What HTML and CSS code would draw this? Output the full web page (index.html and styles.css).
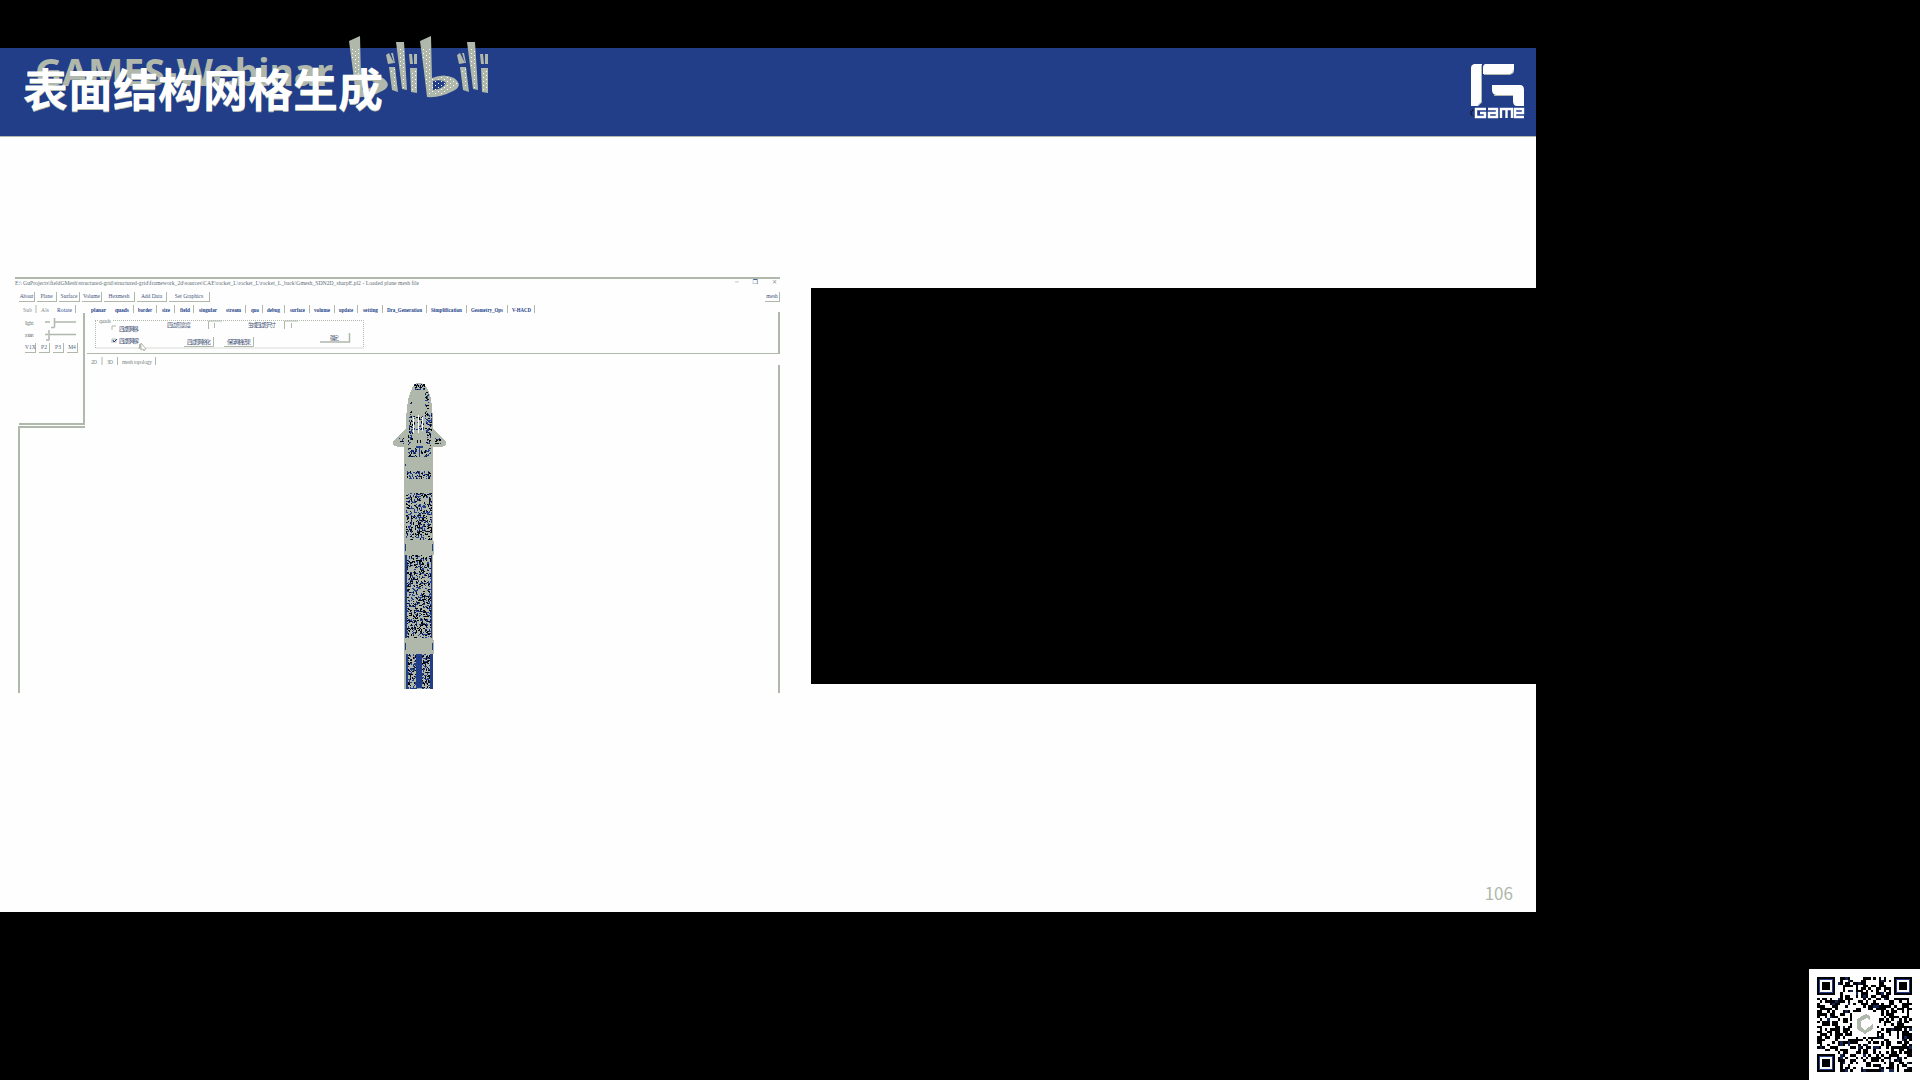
FILE: index.html
```
<!DOCTYPE html>
<html lang="zh-CN">
<head>
<meta charset="utf-8">
<title>表面结构网格生成</title>
<link rel="stylesheet" href="styles.css">
</head>
<body>
<main class="slide">
  <header class="banner">
    <h1 class="title">表面结构网格生成</h1>
    <svg class="logo" width="56" height="56" viewBox="0 0 56 56">
      <g fill="#fefefe">
        <path d="M4 0H12V38L8 42H1V4Q1 1 4 0Z"/>
        <path d="M15 0H44V6Q44 10 40 10H13V3Q13 1 15 0Z"/>
        <path d="M22 21H43V31H27Q22 31 22 26Z"/>
        <path d="M43 21H50Q54 21 54 26V42H47Q43 42 43 37Z"/>
      </g>
      <path d="M11.500 1V38L8 41.500M14 10.500H40Q43.500 10 43.500 6M24 31.500H43" fill="none" stroke="#b0b8ac" stroke-width="1"/>
      <g fill="none" stroke="#fefefe" stroke-width="2.4">
        <path d="M16 45H6V53H15V49H10M18 45H27V53H19V49H27M31 54V45H42V54M36.500 45V54M54 53H45V45H53V49H46"/>
      </g>
      <path d="M3 46L0 49L3 52" fill="none" stroke="#000" stroke-width="1.500" stroke-dasharray="1 1"/>
    </svg>
  </header>
  <section class="stage">
    <div class="app">
      <div class="titlebar">
        <svg class="caption" width="404" height="12"><text x="0" y="6" textLength="404" lengthAdjust="spacingAndGlyphs">E:\ GuProjects\fieldGMesh\structured-grid\structured-grid\framework_2d\sources\CAE\rocket_L\rocket_L\rocket_L_back\Gmesh_SDN2D_sharpE.pl2 - Loaded plane mesh file</text></svg>
        <div class="winctl"><span>─</span><span class="blue">❐</span><span>✕</span></div>
      </div>
      <div class="toolbar" id="toolbar"></div>
      <div class="middle">
        <aside class="side">
          <div class="tabs sidetabs"><svg width="62" height="12"><text x="0" y="6.500" textLength="9">Sub</text><path d="M13 0V8"/><text x="18" y="6.500" textLength="8">Als</text><text class="dark" x="34" y="6.500" textLength="15">Rotate</text><path d="M52.500 0V8"/></svg></div>
          <svg width="62" height="26" class="sliders"><text x="2" y="8" textLength="9">light:</text><path d="M22 5H27M31 5H53M31.500 1V10.500M28 10.500H31.500" stroke-width="1.500"/><text x="2" y="20" textLength="9">rotate:</text><path d="M22 17.500H25M26 17.500H53M26 13V23M23 23H26.500" stroke-width="1.500"/></svg>
          <div class="presets"><span>V1X</span><span>P2</span><span>P3</span><span>M4</span></div>
        </aside>
        <section class="work">
          <svg class="tabsvg" id="tabs" width="470" height="12"></svg>
          <svg class="form" width="270" height="32">
            <path d="M0 3.500H3M18 3.500H268.500V31H0.500V3.500" stroke-dasharray="1 1"/>
            <text x="4" y="5.500" textLength="12">quads</text>
            <path d="M17 13V9H21M17 26V22H21V25H18"/><path d="M18 23L19 25L22 22" class="mark"/>
            <text class="cjk" x="24" y="14" textLength="20">四边形网格1</text><text class="cjk" x="24" y="26" textLength="20">四边形网格2</text>
            <text class="cjk" x="72" y="10" textLength="24">四边形宽度</text><path d="M113.500 12V4H127M119.500 6V11"/>
            <text class="cjk" x="153" y="10" textLength="28">生成四边形尺寸</text><path d="M189.500 12V4H203M196.500 6V11"/>
            <text class="cjk" x="92" y="27" textLength="24">四边形网格化</text><path d="M89 29.500H118.500V20"/>
            <text class="cjk" x="132" y="27" textLength="24">保存网格结果</text><path d="M129 29.500H158.500V20"/>
            <text class="cjk" x="235" y="23" textLength="9">确定</text><path d="M225 25H254.500V16" stroke-width="1.500"/>
            <path class="pointer" d="M45 27V32L44 32L45 27L49 31H46Z"/>
          </svg>
        </section>
      </div>
      <div class="lower"></div>
      <svg class="views" width="70" height="12"><text x="0" y="6.500" textLength="6">2D</text><path d="M11 0V8M26.500 0V8M64.500 0V8"/><text x="16" y="6.500" textLength="6">3D</text><text x="31" y="6.500" textLength="30">mesh topology</text></svg>
      <div class="canvas"><svg id="rocket" width="54" height="306" shape-rendering="crispEdges"></svg></div>
      <svg class="cursor" width="7" height="9"><path d="M1 0V7L3 6L4 8L5 6H6Z"/></svg>
    </div>
    <div class="video"></div>
  </section>
  <footer class="pageno">106</footer>
</main>
<div class="watermark">
  <svg width="500" height="70">
    <defs><pattern id="dots" width="6" height="4" patternUnits="userSpaceOnUse"><path d="M1 0H2V1H1ZM4 2H5V3H4Z" fill="#fefefe"/></pattern></defs>
    <text class="mark-title" x="35" y="51" textLength="298" lengthAdjust="spacingAndGlyphs">GAMES-Webinar</text>
    <g id="bili">
      <path fill-rule="evenodd" d="M349 6L360 1L361 43Q373 38 383 43Q394 51 380 57Q369 63 356 62Q353 35 349 6ZM362 46V55Q372 54 375 48Q371 44 362 46Z"/>
      <path d="M386 20L389 18L394 28L388 29ZM391 18L394 28H395L393 18ZM389 32H395L398 57L392 55ZM396 7H404L407 55L402 54ZM409 19H412L413 29H410ZM414 19H417V29H414ZM410 33H417V58L411 57Z"/>
    </g>
    <use href="#bili" x="71"/>
    <g fill="url(#dots)" shape-rendering="crispEdges">
      <path d="M351 14H360V40H355ZM391 34H395L397 54H393ZM398 14H404L406 53H403ZM411 35H416V56H412Z"/>
      <path transform="translate(71)" d="M351 14H360L361 44Q373 39 382 44Q391 51 379 56Q369 61 357 60ZM391 34H395L397 54H393ZM398 14H404L406 53H403ZM411 35H416V56H412Z"/>
    </g>
  </svg>
</div>
<div class="qr"><svg id="qr" width="97" height="97" shape-rendering="crispEdges"></svg></div>
<script src="main.js"></script>
</body>
</html>
```
FILE: styles.css
```
* { box-sizing: border-box; }
:root { --blue: #223e88; --gray: #b0b8ac; --white: #fefefe; }
body { margin: 0; width: 1920px; height: 1080px; overflow: hidden; background: #000; padding-top: 48px; font-family: "Noto Sans", "Noto Sans CJK SC", sans-serif; position: relative; }
svg { display: block; flex: none; }
.slide { width: 1536px; height: 864px; background: var(--white); display: flex; flex-direction: column; }
.banner { height: 89px; flex: none; background: var(--blue); border-bottom: 1px solid var(--gray); display: flex; justify-content: space-between; padding: 14px 10px 0 23px; }
.logo { margin-top: 2px; }
.title { margin: 0; font: 700 45px/52px "Noto Sans CJK SC", sans-serif; color: var(--white); white-space: nowrap; position: relative; z-index: 2; text-shadow: 0 1px var(--gray); }
.stage { flex: 1; display: flex; padding-top: 140px; }
.app { width: 765px; height: 416px; margin-left: 15px; border-top: 2px solid var(--gray); position: relative; display: flex; flex-direction: column; }
.app text { font: 5.5px "Liberation Serif", "Noto Sans CJK SC", serif; fill: #7c8786; stroke: none; }
.app text.cjk { font: 5.5px "Noto Sans CJK SC", sans-serif; fill: #4f5d7c; }
.app text.dark { fill: var(--blue); }
.app path { fill: none; stroke: var(--gray); }
.app .mark { stroke: var(--blue); }
.titlebar { height: 13px; display: flex; justify-content: space-between; }
.titlebar .caption text { fill: #626e76; }
.winctl { display: flex; justify-content: space-between; width: 42px; margin-right: 3px; font: 6px/6px "DejaVu Sans", sans-serif; color: #8c958e; }
.winctl .blue { color: var(--blue); }
.toolbar { height: 12px; display: flex; margin: 0 0 0 4px; gap: 2px; font: 5.5px/9.5px "Liberation Serif", serif; color: #43527a; }
.toolbar span { height: 10px; border-right: 1px solid var(--gray); border-bottom: 1px solid var(--gray); text-align: center; white-space: nowrap; flex: none; }
.toolbar span:last-child { margin-left: auto; }
.middle { display: flex; height: 121px; width: 764px; margin-left: 4px; flex: none; }
.side { width: 66px; border-right: 2px solid var(--gray); border-bottom: 2px solid var(--gray); border-image: linear-gradient(to bottom, transparent 10px, var(--gray) 10px) 1; border-left: 0; border-top: 0; }
.side .sidetabs { padding: 1px 0 0 4px; height: 13px; }
.sliders { margin-left: 4px; }
.presets { display: flex; gap: 3px; padding-left: 6px; font: 5.5px/9px "Liberation Serif", serif; color: #53617a; }
.presets span { width: 11px; height: 10px; text-align: center; border-right: 1px solid var(--gray); border-bottom: 1px solid var(--gray); }
.work { width: 693px; height: 50px; margin-left: 2px; padding: 1px 0 0 4px; border-bottom: 1px solid var(--gray); border-right: 2px solid var(--gray); border-image: linear-gradient(to bottom, transparent 9px, var(--gray) 9px) 1; border-left: 0; border-top: 0; }
.form { margin: 0 0 0 4px; }
.lower { flex: 1; width: 761px; margin: 1px 0 0 3px; border-left: 2px solid var(--gray); border-top: 2px solid var(--gray); border-image: linear-gradient(to right, var(--gray) 66px, transparent 66px) 1; border-right: 0; border-bottom: 0; }
.views { position: absolute; left: 76px; top: 78px; }
.canvas { position: absolute; left: 70px; top: 86px; width: 695px; height: 328px; border-right: 2px solid var(--gray); padding: 18px 0 0 308px; }
.cursor { position: absolute; left: 125px; top: 64px; }
.app .cursor path { fill: var(--white); }
.video { margin: 11px 0 0 31px; width: 725px; height: 396px; background: #000; }
.pageno { height: 39px; padding-right: 23px; text-align: right; font: 17px/39px "Noto Sans CJK SC", sans-serif; color: var(--gray); }
.watermark { position: absolute; left: 0; top: 35px; fill: var(--gray); }
.mark-title { font: 700 37px "Noto Sans", sans-serif; }
.qr { position: absolute; left: 1809px; top: 969px; width: 111px; height: 111px; background: var(--white); padding: 8px; }
```
FILE: main.js
```
const NS = 'http://www.w3.org/2000/svg';
const GRAY = '#b0b8ac', BLUE = '#223e88', BLACK = '#05070c', WHITE = '#fefefe';
let seed = 77;
const rnd = () => (seed = (seed * 16807) % 2147483647) / 2147483647;
function add(parent, tag, attrs, text) {
  const el = document.createElementNS(NS, tag);
  for (const k in attrs) el.setAttribute(k, attrs[k]);
  if (text) el.textContent = text;
  parent.append(el);
  return el;
}
const rect = (p, x, y, w, h, f) => add(p, 'rect', { x, y, width: w, height: h, fill: f });

const buttons = [['About', 16], ['Plane', 20], ['Surface', 21], ['Volume', 20], ['Hexmesh', 31], ['Add Data', 30], ['Set Graphics', 41], ['mesh', 15]];
const bar = document.getElementById('toolbar');
for (const [label, w] of buttons) {
  const s = document.createElement('span');
  s.textContent = label; s.style.width = w + 'px'; bar.append(s);
}

const tabs = document.getElementById('tabs');
[['planar', 91, 15, 0], ['quads', 115, 14, 133], ['border', 138, 14, 156], ['size', 162, 8, 174], ['field', 180, 10, 193], ['singular', 199, 18, 226], ['stream', 226, 15, 245], ['quo', 251, 8, 262], ['debug', 267, 13, 284], ['surface', 290, 15, 309], ['volume', 314, 16, 334], ['update', 339, 14, 357], ['setting', 363, 15, 382], ['Dra_Generation', 387, 35, 426], ['Simplification', 431, 31, 466], ['Geometry_Ops', 471, 32, 507], ['V-HACD', 512, 19, 534]].forEach(([t, x, w, sep]) => {
  add(tabs, 'text', { x: x - 91, y: 6.5, textLength: w, class: 'dark', lengthAdjust: 'spacingAndGlyphs', style: 'font-weight:bold' }, t);
  if (sep && t !== 'singular') add(tabs, 'path', { d: `M${sep - 90.5} 0V8` });
});

const r = document.getElementById('rocket');
add(r, 'path', { d: 'M26 0Q20 0 18 8Q13 18 13 46L8 50L0 59V62L5 64H11V306H40V64H49L53 62V59L45 50L40 46Q40 16 35 7Q32 0 26 0Z', style: `fill:${GRAY};stroke:none` });
function speckle(x, y, w, h, density) {
  for (let yy = y; yy < y + h; yy++) for (let xx = x; xx < x + w; xx++)
    if (rnd() < density) {
      const tall = rnd() < 0.3 && yy + 1 < y + h;
      rect(r, xx, yy, !tall && rnd() < 0.5 && xx + 1 < x + w ? 2 : 1, tall ? 2 : 1, rnd() < 0.5 ? BLUE : BLACK);
    }
}
speckle(21, 1, 11, 6, 0.4); speckle(32, 7, 4, 26, 0.28); speckle(17, 13, 2, 22, 0.16);
speckle(16, 33, 6, 17, 0.32); speckle(23, 33, 8, 14, 0.25); speckle(32, 30, 7, 20, 0.32);
speckle(15, 49, 5, 14, 0.3); speckle(33, 49, 5, 14, 0.3); rect(r, 24, 57, 1, 3, BLACK); rect(r, 27, 57, 1, 3, BLACK);
speckle(5, 55, 6, 6, 0.25); speckle(42, 55, 6, 6, 0.25);
speckle(15, 65, 9, 9, 0.4); speckle(28, 65, 10, 9, 0.4);
speckle(14, 88, 24, 8, 0.32);
speckle(13, 110, 26, 47, 0.28); speckle(12, 171, 27, 84, 0.28);
rect(r, 20, 34, 1, 16, WHITE); rect(r, 25, 32, 1, 18, WHITE); rect(r, 29, 34, 1, 14, WHITE);
rect(r, 23, 63, 7, 2, BLUE); rect(r, 26, 63, 1, 11, BLUE); rect(r, 12, 81, 1, 2, BLUE);
rect(r, 12, 171, 2, 84, BLUE); rect(r, 38, 171, 1, 84, BLUE);
for (const y of [158, 257]) {
  rect(r, 11, y, 30, 14, GRAY); rect(r, 12, y + 3, 1, 7, BLUE); rect(r, 39, y + 3, 1, 7, BLUE);
}
speckle(13, 271, 26, 35, 0.3);
rect(r, 23, 271, 6, 34, BLUE); rect(r, 13, 271, 2, 35, BLUE); rect(r, 37, 271, 3, 35, BLUE);

const q = document.getElementById('qr'), N = 37, M = 95 / N;
const inFinder = (x, y) => (x < 8 && y < 8) || (x > 28 && y < 8) || (x < 8 && y > 28);
for (let y = 0; y < N; y++) for (let x = 0; x < N; x++)
  if (!inFinder(x, y) && rnd() < 0.5) rect(q, x * M, y * M, M, M, rnd() < 0.12 ? '#152754' : '#000');
function finder(x, y) {
  rect(q, x, y, 7 * M, 7 * M, '#000'); rect(q, x + 2, y + 2, 7 * M - 4, 7 * M - 4, BLUE);
  rect(q, x + 3, y + 3, 7 * M - 6, 7 * M - 6, WHITE); rect(q, x + 5, y + 5, 3 * M, 3 * M, '#000');
}
finder(0, 0); finder(30 * M, 0); finder(0, 30 * M);
rect(q, 35, 35, 25, 25, WHITE);
add(q, 'path', { d: 'M49 37L40 42V52L48 57L56 52V47L52 50L48 53L44 50V44L50 41L53 43V39Z', fill: GRAY });
```
